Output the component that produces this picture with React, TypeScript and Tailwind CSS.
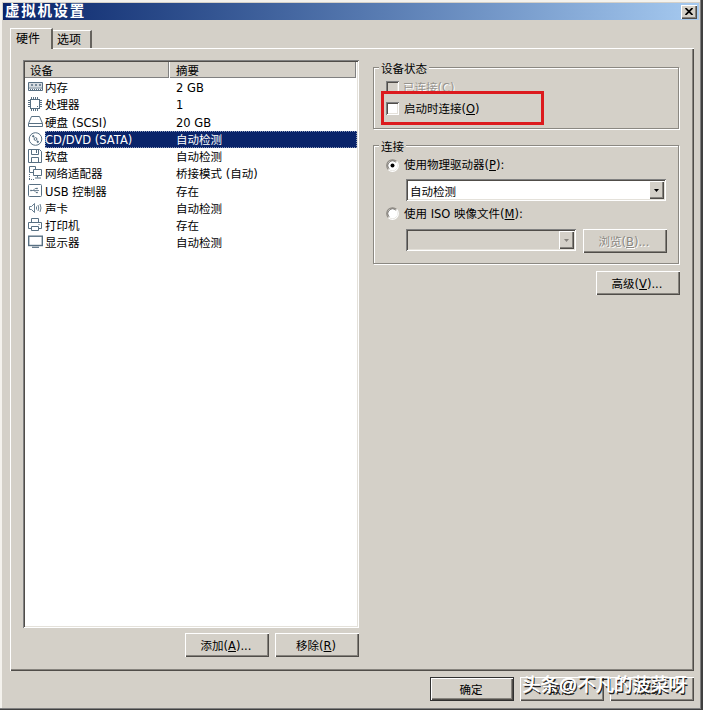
import { useState } from "react";
import type { ReactNode } from "react";
import clsx from "clsx";

const raised =
  "bg-[#d4d0c8] shadow-[inset_1px_1px_0_#fff,inset_-1px_-1px_0_#504d49,inset_-2px_-2px_0_#86837d]";
const sunken =
  "shadow-[inset_1px_1px_0_#808080,inset_-1px_-1px_0_#fff,inset_2px_2px_0_#504d49,inset_-2px_-2px_0_#e4e1da]";

const icons: Record<string, ReactNode> = {
  memory: (
    <>
      <path d="M.5 3.5h14v8H.5zM.5 9h14" />
      <path d="M1 4h13v4H1z" fill="currentColor" fillOpacity=".25" stroke="none" />
      <path d="M3 6h2M7 6h2M11 6h2" strokeWidth="1.6" />
      <path d="M2 10.5h11" strokeDasharray="1 1" />
    </>
  ),
  cpu: (
    <>
      <rect x="2.5" y="3.5" width="9" height="9" />
      <path d="M3.5 1v2M5.5 1v2M7.5 1v2M9.5 1v2M3.5 13v2M5.5 13v2M7.5 13v2M9.5 13v2M0 4.5h2M0 6.5h2M0 8.5h2M0 10.5h2M12 4.5h2M12 6.5h2M12 8.5h2M12 10.5h2" />
      <path d="M9 10.5h1" />
    </>
  ),
  disk: <path d="M3.5 2.5h8l3 7v3H.5v-3zM.5 9.5h14" />,
  cd: (
    <>
      <circle cx="7.5" cy="8" r="6.3" />
      <circle cx="7.5" cy="8" r="1.4" />
      <path d="M4.5 4.5l1.5 1.5M9 10l1.5 1.5" strokeWidth="1.8" />
    </>
  ),
  floppy: (
    <>
      <path d="M.5 1.5h11l2 2v11H.5z" />
      <path d="M3.5 1.5v5h7v-5M8.5 2v3M3.5 14.5v-5h7v5" />
    </>
  ),
  network: (
    <>
      <path d="M5.5 7.5h-4v-6h6v3M5.5 4.5h8v6h-8zM9.5 10.5v2M7 13h6" />
      <path d="M1.5 9v5.5M1 14.5h5" strokeDasharray="1 1" />
    </>
  ),
  usb: (
    <>
      <rect x=".5" y="1.5" width="13" height="12" rx="1" />
      <path d="M3 7.5h8M5 7.5l2-2h2M6 7.5l2 2h1" strokeWidth=".8" />
      <path d="M2.5 7h1v1h-1zM8.5 5h1v1h-1zM8.5 9h1v1h-1z" fill="currentColor" strokeWidth=".5" />
    </>
  ),
  sound: <path d="M1.5 6.5h2l3-3v9l-3-3h-2zM8.5 6.5v3M10 5q1.5 3 0 6M12 4q2 4 0 8" strokeWidth=".9" />,
  printer: (
    <>
      <path d="M3.5 5.5v-4h7v4M3 11.5H.5v-6h13v6H11" />
      <path d="M3.5 9.5h7v4h-7zM10.5 7.5h1" />
    </>
  ),
  display: (
    <>
      <rect x=".7" y="2.2" width="13.6" height="9.3" strokeWidth="1.4" />
      <path d="M4 13.3h7" strokeWidth="1.2" />
    </>
  ),
};

const devices = [
  { icon: "memory", name: "内存", summary: "2 GB" },
  { icon: "cpu", name: "处理器", summary: "1" },
  { icon: "disk", name: "硬盘 (SCSI)", summary: "20 GB" },
  { icon: "cd", name: "CD/DVD (SATA)", summary: "自动检测" },
  { icon: "floppy", name: "软盘", summary: "自动检测" },
  { icon: "network", name: "网络适配器", summary: "桥接模式 (自动)" },
  { icon: "usb", name: "USB 控制器", summary: "存在" },
  { icon: "sound", name: "声卡", summary: "自动检测" },
  { icon: "printer", name: "打印机", summary: "存在" },
  { icon: "display", name: "显示器", summary: "自动检测" },
];

function Label({ text, hotkey, tail = "" }: { text: string; hotkey: string; tail?: string }) {
  return (
    <span className="whitespace-nowrap">
      {text}(<span className="underline underline-offset-1">{hotkey}</span>){tail}
    </span>
  );
}

function Button({
  children,
  disabled,
  primary,
}: {
  children: ReactNode;
  disabled?: boolean;
  primary?: boolean;
}) {
  return (
    <button
      type="button"
      disabled={disabled}
      className={clsx(
        "flex h-6 w-[84px] shrink-0 items-center justify-center pt-[3px] pr-0.5",
        raised,
        primary && "border border-[#303030]",
        disabled && "text-[#8a8781] [text-shadow:1px_1px_0_#fff]"
      )}
    >
      {children}
    </button>
  );
}

function Group({ title, className, children }: { title: string; className: string; children: ReactNode }) {
  return (
    <fieldset
      className={clsx(
        "relative w-[306px] border border-[#8b8882] shadow-[1px_1px_0_#fff,inset_1px_1px_0_#fff]",
        className
      )}
    >
      <span className="absolute -top-[7px] left-[5px] bg-[#d4d0c8] px-0.5 leading-4">{title}</span>
      {children}
    </fieldset>
  );
}

function Check({ disabled }: { disabled?: boolean }) {
  return <span className={clsx("size-[13px] shrink-0", disabled ? "bg-[#d4d0c8]" : "bg-white", sunken)} />;
}

function Radio({ checked, onClick }: { checked: boolean; onClick: () => void }) {
  return (
    <svg width="13" height="13" viewBox="0 0 13 13" className="shrink-0" onClick={onClick}>
      <circle cx="6.5" cy="6.5" r="5" fill="#fff" />
      <path d="M2.4 10.6A5.6 5.6 0 0 1 10.6 2.4" fill="none" stroke="#8b8882" strokeWidth="1.1" />
      <path d="M3.2 9.7A4.6 4.6 0 0 1 9.7 3.2" fill="none" stroke="#55524d" strokeWidth=".8" />
      <path d="M2.4 10.6A5.6 5.6 0 0 0 10.6 2.4" fill="none" stroke="#fff" strokeWidth="1.2" />
      {checked && <circle cx="6.5" cy="6.5" r="2" fill="#000" />}
    </svg>
  );
}

function Combo({ value, disabled, className }: { value?: string; disabled?: boolean; className: string }) {
  return (
    <div className={clsx("flex h-[22px] justify-between p-0.5", !disabled && "bg-white", sunken, className)}>
      <span className="pt-[3px] pl-0.5 leading-4">{value}</span>
      <span className={clsx("flex w-[15px] items-center justify-center", raised)}>
        <svg width="5" height="3" viewBox="0 0 5 3">
          <path d="M0 0h5L2.5 3z" fill={disabled ? "#85827c" : "#000"} />
        </svg>
      </span>
    </div>
  );
}

export default function App() {
  const [selected, setSelected] = useState(3);
  const [source, setSource] = useState("drive");

  return (
    <div className="relative flex h-[710px] w-[703px] flex-col overflow-hidden bg-[#d4d0c8] pt-[3px] pr-1 pl-[3px] font-['DejaVu_Sans','Noto_Sans_CJK_SC',sans-serif] text-[11.5px] text-black shadow-[inset_-2px_-1px_0_#404040,inset_-3px_-2px_0_#808080,inset_2px_2px_0_#f4f2ed]">
      <header className="flex h-[17px] shrink-0 items-center justify-between bg-linear-to-r from-[#0a246a] to-[#a6caf0] pr-0.5 pl-0.5">
        <h1 className="text-[14.5px] leading-[17px] font-bold tracking-[1.7px] text-white">虚拟机设置</h1>
        <button type="button" className={clsx("flex h-3.5 w-4 items-center justify-center", raised)}>
          <svg width="8" height="7" viewBox="0 0 8 7" stroke="#000" strokeWidth="1.7">
            <path d="M.5 0l7 7M7.5 0l-7 7" />
          </svg>
        </button>
      </header>

      <nav className="mt-2 ml-[7px] flex h-5 shrink-0 items-end">
        <div className="z-10 -mb-px h-[21px] w-[43px] border-t border-r-2 border-l border-t-white border-r-[#66635e] border-l-white bg-[#d4d0c8] pl-[5px] text-xs leading-[21px]">
          硬件
        </div>
        <div className="h-[18px] w-[39px] border-t border-r-2 border-t-white border-r-[#66635e] pl-1 text-xs leading-[19px]">
          选项
        </div>
      </nav>

      <main className="ml-[7px] flex h-[623px] w-[684px] shrink-0 pt-3 pl-[13px] shadow-[inset_1px_1px_0_#fff,inset_-1px_-1px_0_#504d49,inset_-2px_-2px_0_#86837d]">
        <section className="w-[336px] shrink-0">
          <div className={clsx("h-[568px] bg-white p-0.5", sunken)}>
            <div className="mb-px flex h-4 w-[331px] bg-[#d4d0c8] leading-[19px] shadow-[inset_-1px_-1px_0_#808080]">
              <span className="w-36 border-r border-[#808080] pl-[5px]">设备</span>
              <span className="border-l border-white pl-1.5">摘要</span>
            </div>
            {devices.map((d, i) => (
              <div key={d.name} className="flex h-[17.25px] pl-[3px] leading-[18.5px]" onClick={() => setSelected(i)}>
                <svg
                  viewBox="0 0 16 16"
                  className="mr-px size-4 shrink-0 text-[#587083]"
                  fill="none"
                  stroke="currentColor"
                >
                  {icons[d.icon]}
                </svg>
                <div
                  className={clsx(
                    "flex flex-1 whitespace-nowrap",
                    selected === i && "bg-[#0a246a] text-white outline-1 -outline-offset-1 outline-dotted outline-[#8f9bb8]"
                  )}
                >
                  <span className="w-[131px]">{d.name}</span>
                  <span>{d.summary}</span>
                </div>
              </div>
            ))}
          </div>
          <div className="mt-[5px] flex justify-end gap-1.5">
            <Button>
              <Label text="添加" hotkey="A" tail="..." />
            </Button>
            <Button>
              <Label text="移除" hotkey="R" />
            </Button>
          </div>
        </section>

        <section className="ml-3.5 pt-[7px]">
          <Group title="设备状态" className="h-[62px]">
            <div className="ml-3 flex h-[23px] items-start gap-1 overflow-hidden pt-[13px] leading-[15px] text-[#96938d] [text-shadow:1px_1px_0_#fff]">
              <Check disabled />
              <Label text="已连接" hotkey="C" />
            </div>
            <div className="ml-[7px] flex h-[34px] w-[163px] items-center gap-[5px] border-3 border-[#dc1a1e] pl-0.5">
              <Check />
              <span className="pt-[3px]">
                <Label text="启动时连接" hotkey="O" />
              </span>
            </div>
          </Group>

          <Group title="连接" className="mt-4 h-[119px] pt-3 pl-3">
            <label className="flex h-[15px] items-center gap-[5px]">
              <Radio checked={source === "drive"} onClick={() => setSource("drive")} />
              <Label text="使用物理驱动器" hotkey="P" tail=":" />
            </label>
            <Combo value="自动检测" className="mt-1.5 ml-5 w-[260px]" />
            <label className="mt-1 flex h-[17px] items-center gap-[5px]">
              <Radio checked={source === "iso"} onClick={() => setSource("iso")} />
              <span className="pt-0.5">
                <Label text="使用 ISO 映像文件" hotkey="M" tail=":" />
              </span>
            </label>
            <div className="mt-[7px] ml-5 flex gap-[7px]">
              <Combo disabled className="w-[170px]" />
              <Button disabled>
                <Label text="浏览" hotkey="B" tail="..." />
              </Button>
            </div>
          </Group>
          <div className="mt-[7px] -mr-px flex justify-end">
            <Button>
              <Label text="高级" hotkey="V" tail="..." />
            </Button>
          </div>
        </section>
      </main>

      <footer className="mt-1.5 mr-[5px] flex justify-end gap-1.5">
        <Button primary>确定</Button>
        <Button>取消</Button>
        <Button>帮助</Button>
      </footer>

      <div className="absolute top-[673px] left-[522px] font-['Liberation_Sans','Noto_Sans_CJK_SC',sans-serif] text-[18.3px] leading-6 whitespace-nowrap text-white [text-shadow:0.5px_0_0_#fff,1.5px_1.5px_0_#222]">
        头条@不凡的菠菜呀
      </div>
    </div>
  );
}
